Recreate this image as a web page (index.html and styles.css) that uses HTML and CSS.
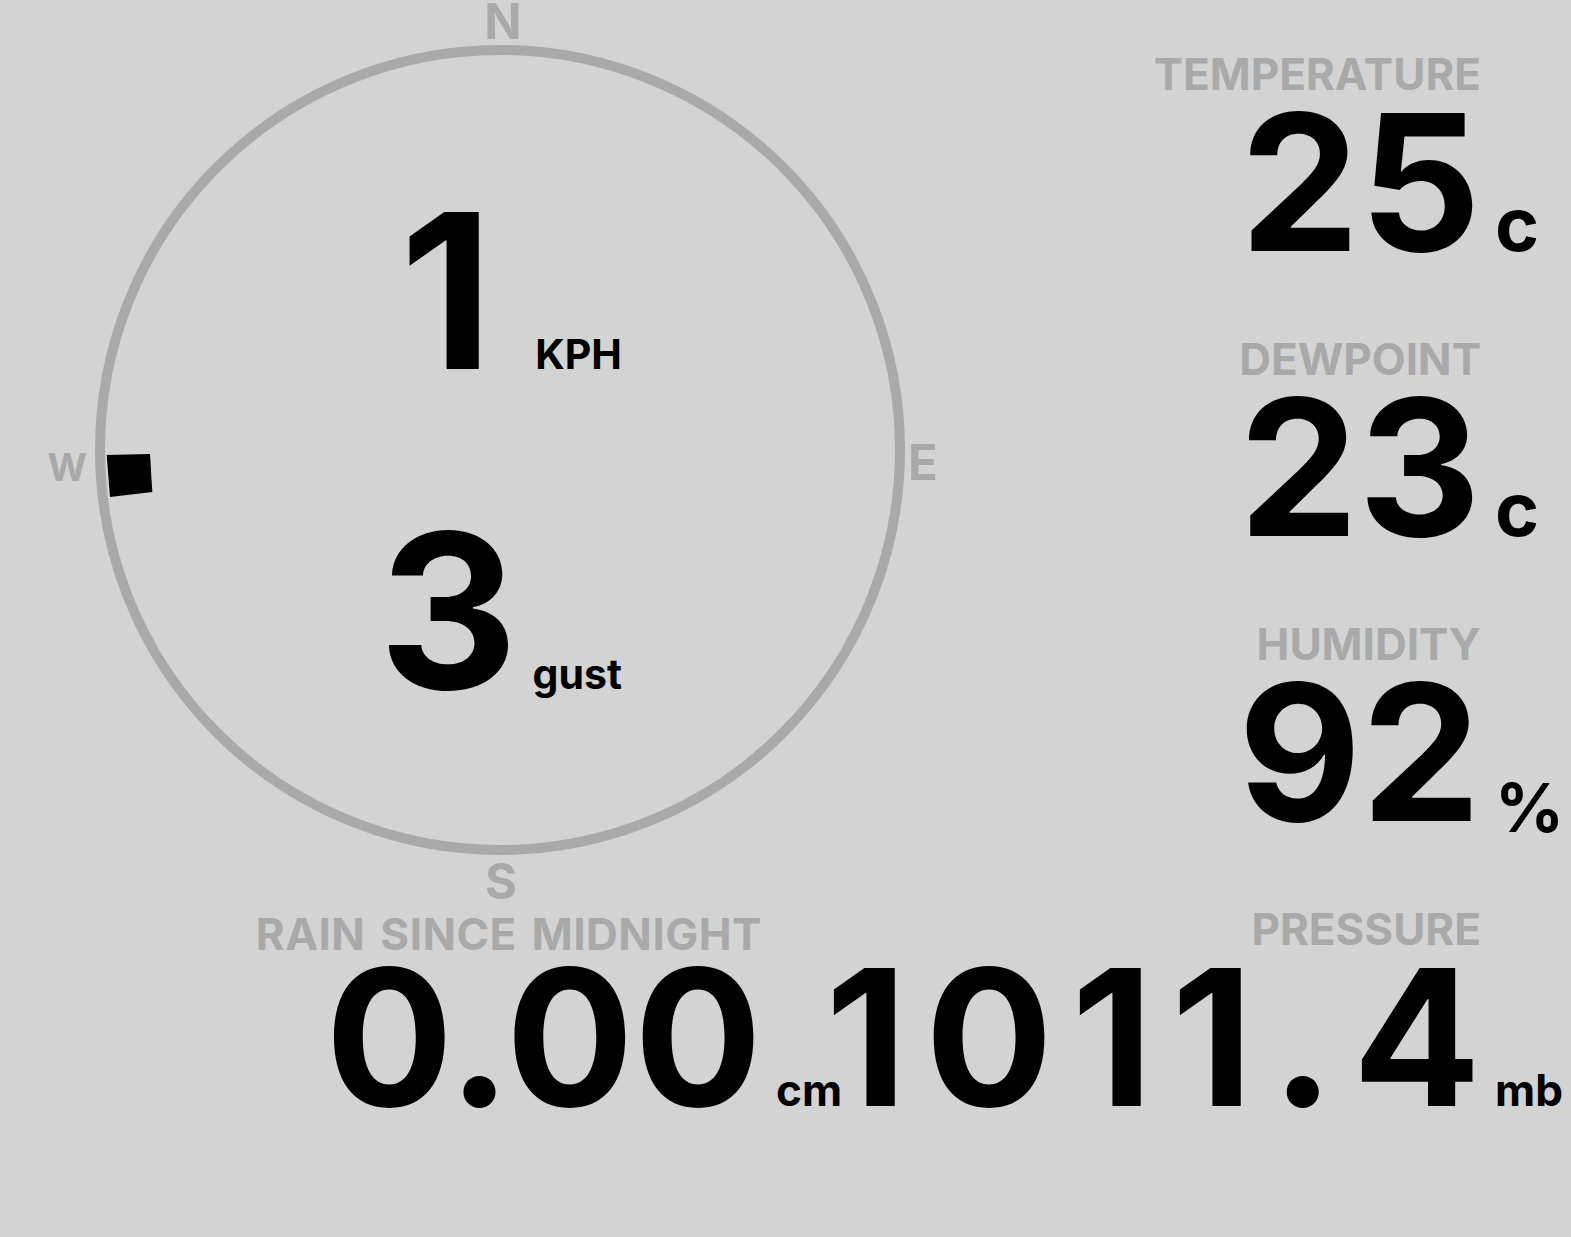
FILE: index.html
```html
<!DOCTYPE html>
<html lang="en">
<head>
<meta charset="utf-8">
<title>Weather station</title>
<link rel="stylesheet" href="styles.css">
</head>
<body>
<main class="dash">
  <section class="top">
    <div class="compass">
      <svg class="dial" width="1000" height="905" viewBox="0 0 1000 905">
        <circle class="ring" cx="500" cy="450" r="400"/>
        <text class="cardinal" x="503" y="39" text-anchor="middle">N</text>
        <text class="cardinal" x="908" y="480">E</text>
        <text class="cardinal" x="501" y="899" text-anchor="middle">S</text>
        <text class="cardinal cardinal-w" x="87" y="481" text-anchor="end">W</text>
        <polygon class="pointer" points="106.7,455 150,454 152.3,492 110,497"/>
      </svg>
      <div class="wind">
        <div class="wind-row"><span class="wind-num">1</span><span class="wind-unit">KPH</span></div>
        <div class="wind-row"><span class="wind-num">3</span><span class="wind-unit">gust</span></div>
      </div>
    </div>
    <div class="stats">
      <div class="stat">
        <div class="label">TEMPERATURE</div>
        <div class="value">25<span class="unit unit-c">c</span></div>
      </div>
      <div class="stat">
        <div class="label">DEWPOINT</div>
        <div class="value">23<span class="unit unit-c">c</span></div>
      </div>
      <div class="stat">
        <div class="label">HUMIDITY</div>
        <div class="value">92<span class="unit unit-pct">%</span></div>
      </div>
    </div>
  </section>
  <section class="bottom">
    <div class="stat stat-rain">
      <div class="label">RAIN SINCE MIDNIGHT</div>
      <div class="value">0.00<span class="unit unit-sm">cm</span></div>
    </div>
    <div class="stat stat-pressure">
      <div class="label">PRESSURE</div>
      <div class="value value-wide">1011.4<span class="unit unit-sm">mb</span></div>
    </div>
  </section>
</main>
</body>
</html>
```

FILE: styles.css
```css
html, body {
  margin: 0;
  padding: 0;
}

body {
  background: #d3d3d3;
  color: #000;
  font-family: Inter, Roboto, "Liberation Sans", sans-serif;
  font-weight: 700;
}

.dash {
  width: 1571px;
}

.top {
  display: flex;
  align-items: flex-start;
  height: 905px;
}

.compass {
  display: grid;
  width: 1000px;
  height: 905px;
  flex: none;
}

.compass > * {
  grid-area: 1 / 1;
}

.dial {
  display: block;
}

.ring {
  fill: none;
  stroke: #a9a9a9;
  stroke-width: 10;
}

.cardinal {
  font-family: Inter, Roboto, "Liberation Sans", sans-serif;
  font-weight: 700;
  font-size: 49px;
  fill: #a9a9a9;
}

.cardinal-w {
  font-size: 38px;
}

.pointer {
  fill: #000;
}

.wind {
  width: 622px;
  padding-top: 131px;
  text-align: right;
}

.wind-row {
  font-size: 216px;
  line-height: 320px;
  white-space: nowrap;
}

.wind-num {
  display: inline-block;
  width: 130px;
  text-align: center;
}

.wind-unit {
  font-size: 41px;
  line-height: 1;
  margin-left: 24px;
}

.stats {
  flex: 1;
  padding-top: 52px;
  padding-right: 90px;
  text-align: right;
}

.stat + .stat {
  margin-top: 75px;
}

.label {
  color: #a9a9a9;
  font-size: 44px;
  line-height: 45px;
  letter-spacing: 0;
  white-space: nowrap;
}

.stat-rain .label {
  letter-spacing: 0.5px;
  word-spacing: 4px;
}

.value {
  margin-top: 5px;
  font-size: 190px;
  line-height: 160px;
  letter-spacing: 0;
  white-space: nowrap;
}

.value-wide {
  letter-spacing: 18px;
}

.unit {
  display: inline-block;
  width: 0;
  text-indent: 14px;
  letter-spacing: 0;
  line-height: 1;
  text-align: left;
  white-space: nowrap;
}

.value-wide .unit {
  margin-left: -18px;
}

.unit-c {
  font-size: 75px;
}

.unit-pct {
  font-size: 68px;
  vertical-align: -11px;
}

.unit-sm {
  font-size: 44px;
}

.bottom {
  display: flex;
  align-items: flex-start;
  padding-top: 2px;
}

.bottom .stat + .stat {
  margin-top: 0;
}

.stat-rain {
  width: 762px;
  flex: none;
  text-align: right;
}

.stat-rain .label {
  margin-top: 5px;
}

.stat-rain .value {
  margin-top: 0;
}

.stat-pressure {
  flex: 1;
  padding-right: 90px;
  text-align: right;
}
```
